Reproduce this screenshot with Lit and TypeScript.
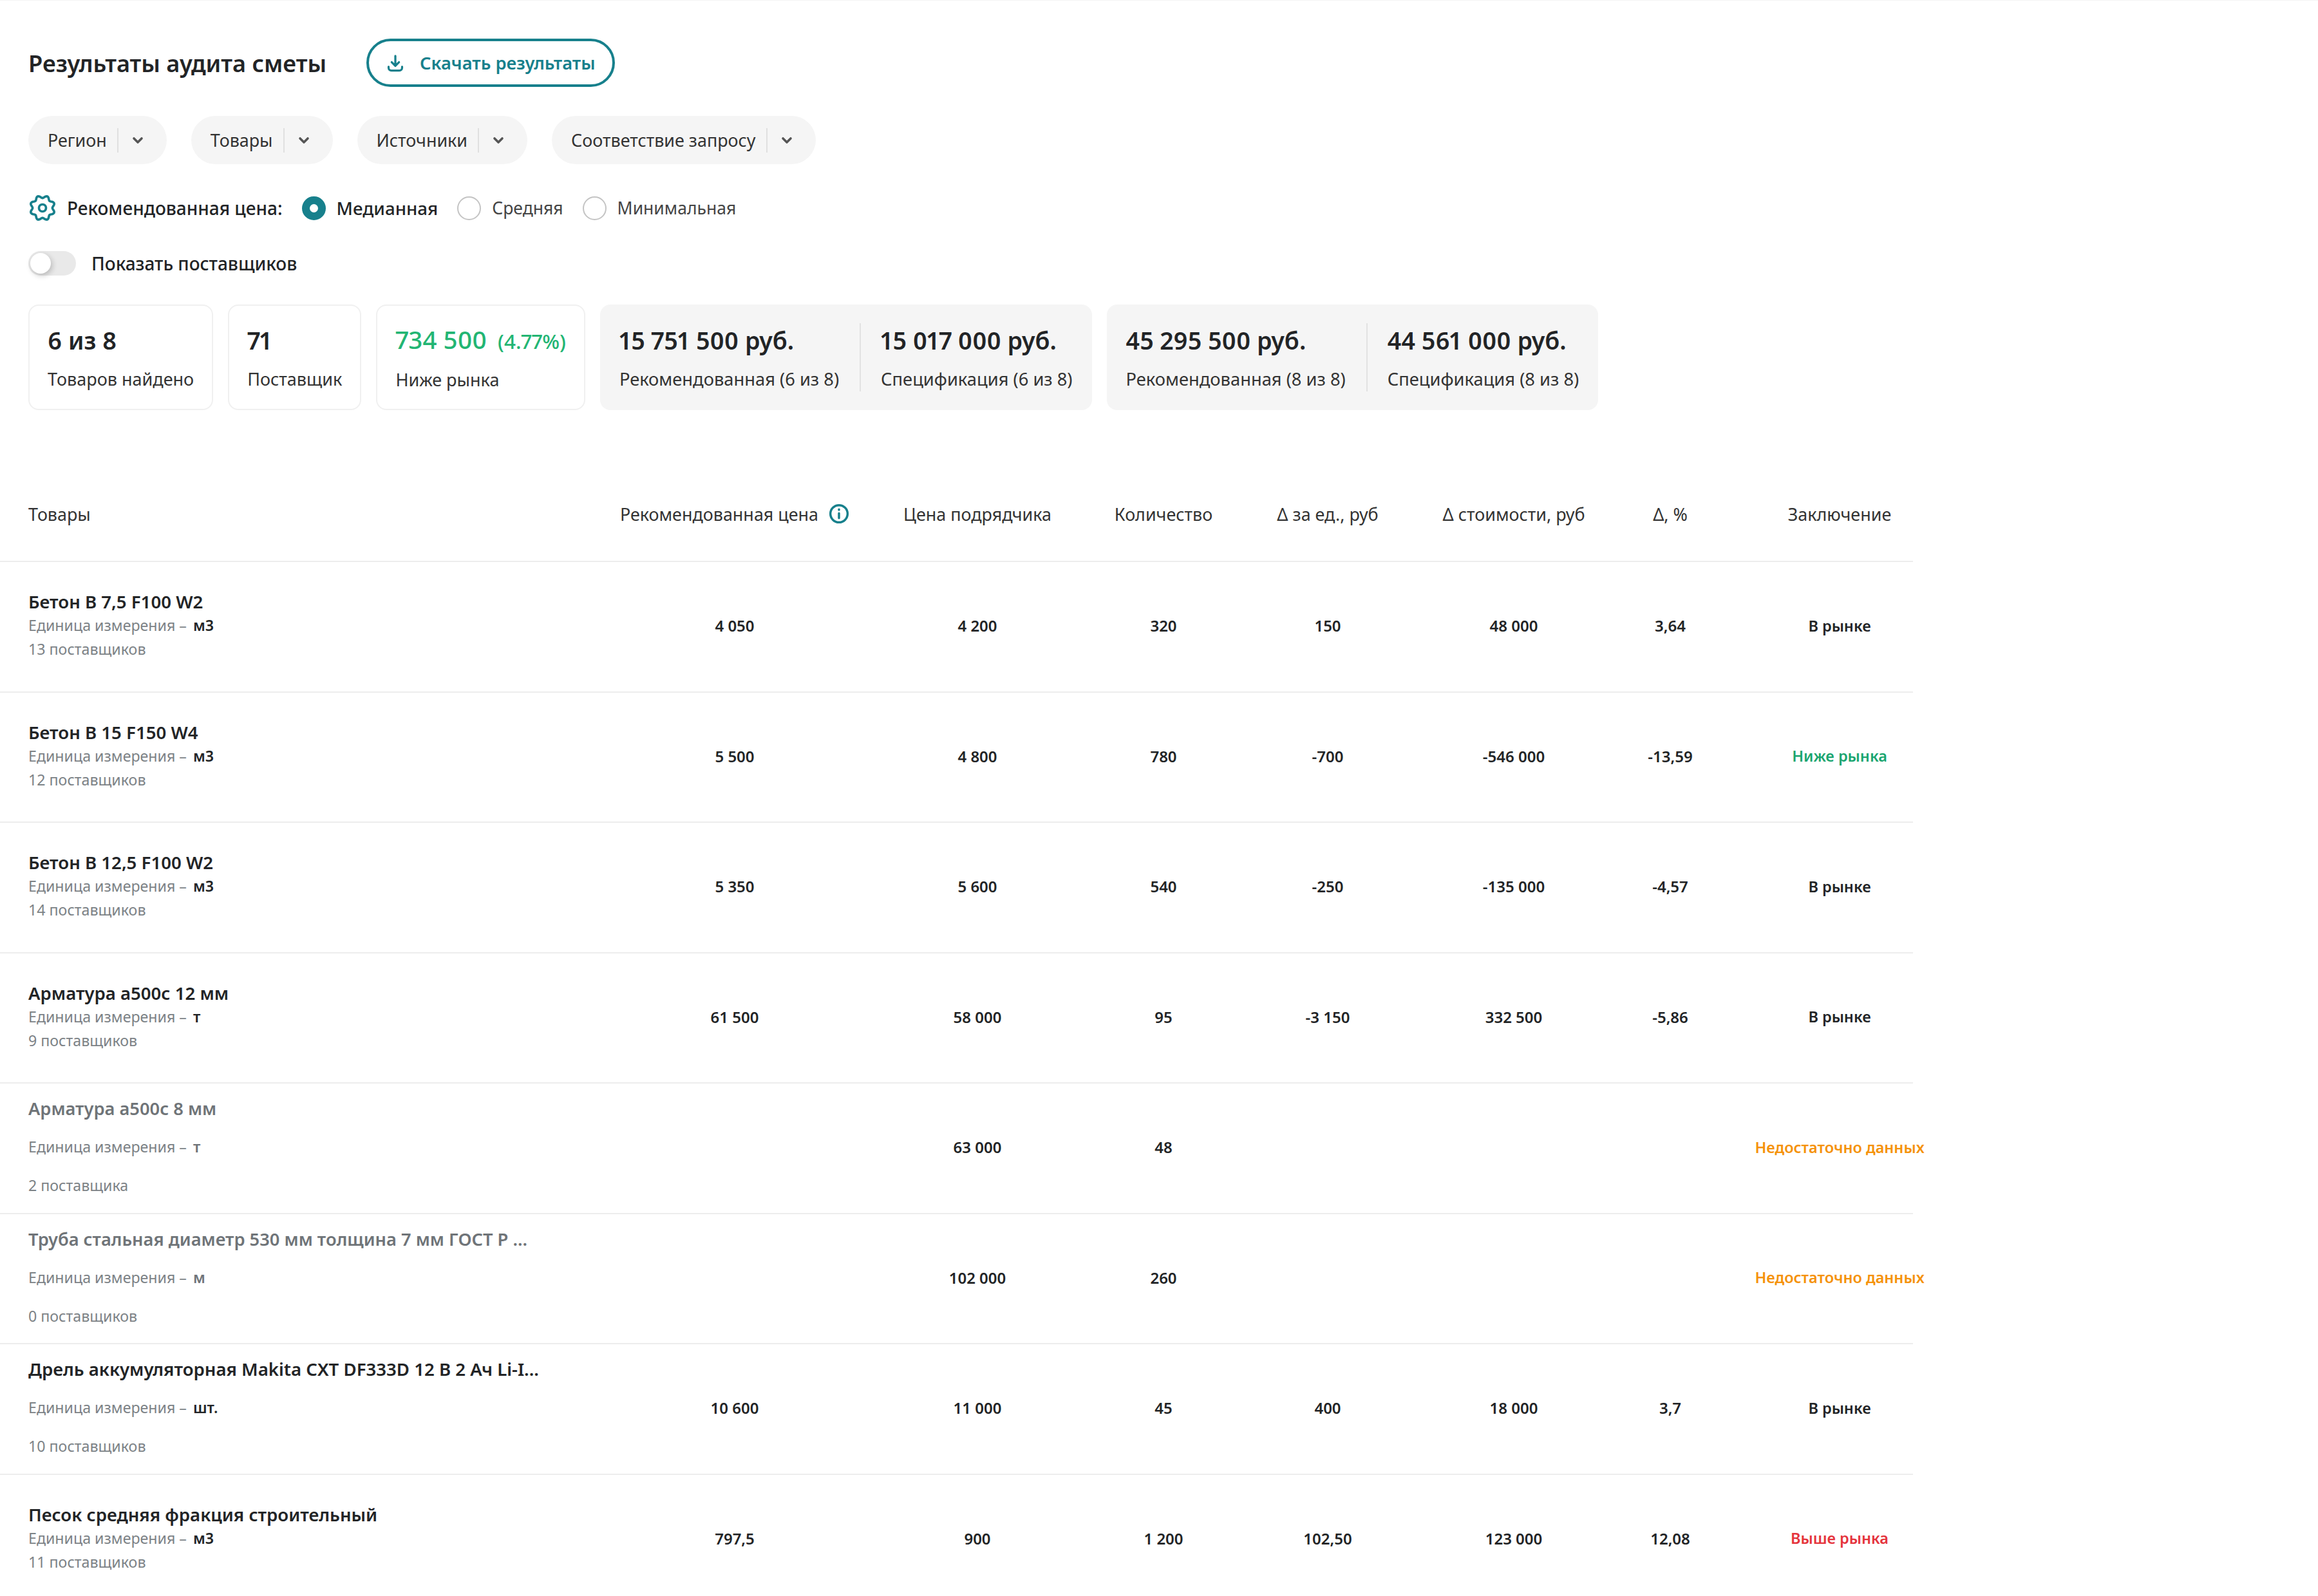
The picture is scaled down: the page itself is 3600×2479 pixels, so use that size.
import { LitElement, css, html, svg } from 'lit';
import { customElement } from 'lit/decorators.js';

type Row = {
  name: string;
  unit: string;
  suppliers: string;
  values: string[];
  verdict: string;
  tone?: string;
  muted?: boolean;
  spread?: boolean;
};

const ROWS: Row[] = [
  { name: 'Бетон В 7,5 F100 W2', unit: 'м3', suppliers: '13 поставщиков', values: ['4 050', '4 200', '320', '150', '48 000', '3,64'], verdict: 'В рынке' },
  { name: 'Бетон В 15 F150 W4', unit: 'м3', suppliers: '12 поставщиков', values: ['5 500', '4 800', '780', '-700', '-546 000', '-13,59'], verdict: 'Ниже рынка', tone: 'low' },
  { name: 'Бетон В 12,5 F100 W2', unit: 'м3', suppliers: '14 поставщиков', values: ['5 350', '5 600', '540', '-250', '-135 000', '-4,57'], verdict: 'В рынке' },
  { name: 'Арматура а500с 12 мм', unit: 'т', suppliers: '9 поставщиков', values: ['61 500', '58 000', '95', '-3 150', '332 500', '-5,86'], verdict: 'В рынке' },
  { name: 'Арматура а500с 8 мм', unit: 'т', suppliers: '2 поставщика', values: ['', '63 000', '48', '', '', ''], verdict: 'Недостаточно данных', tone: 'warn', muted: true, spread: true },
  { name: 'Труба стальная диаметр 530 мм толщина 7 мм ГОСТ Р ...', unit: 'м', suppliers: '0 поставщиков', values: ['', '102 000', '260', '', '', ''], verdict: 'Недостаточно данных', tone: 'warn', muted: true, spread: true },
  { name: 'Дрель аккумуляторная Makita CXT DF333D 12 В 2 Ач Li-I...', unit: 'шт.', suppliers: '10 поставщиков', values: ['10 600', '11 000', '45', '400', '18 000', '3,7'], verdict: 'В рынке', spread: true },
  { name: 'Песок средняя фракция строительный', unit: 'м3', suppliers: '11 поставщиков', values: ['797,5', '900', '1 200', '102,50', '123 000', '12,08'], verdict: 'Выше рынка', tone: 'high' },
];

const HEADERS = ['Цена подрядчика', 'Количество', 'Δ за ед., руб', 'Δ стоимости, руб', 'Δ, %', 'Заключение'];

const chevron = svg`<svg class="chev" viewBox="0 0 16 16" fill="none" stroke="currentColor" stroke-width="2.4" stroke-linecap="round" stroke-linejoin="round"><path d="M4 6l4 4 4-4"/></svg>`;

// wavy outline of the settings gear, a dip at the top and eight lobes
function gearPath(): string {
  const pts: string[] = [];
  for (let i = 0; i < 96; i++) {
    const a = (i / 96) * Math.PI * 2;
    const r = 9.5 - 1.1 * Math.cos(a * 8);
    pts.push(`${(12 + r * Math.sin(a)).toFixed(2)} ${(12 - r * Math.cos(a)).toFixed(2)}`);
  }
  return `M${pts.join('L')}Z`;
}

@customElement('app-root')
export class AppRoot extends LitElement {
  static styles = css`
    :host {
      display: block;
      width: 3600px;
      height: 2479px;
      overflow: hidden;
      background: #fff;
      color: #222426;
      font-family: 'Noto Sans', sans-serif;
      font-size: 28px;
    }
    .top {
      padding: 59px 0 0 44px;
      border-top: 1px solid #f4f4f4;
      display: flex;
      flex-direction: column;
      align-items: flex-start;
    }
    .title-row {
      display: flex;
      align-items: center;
      gap: 62px;
      height: 75px;
    }
    h1 {
      margin: 0;
      font-size: 36.2px;
      font-weight: 600;
    }
    .download {
      display: flex;
      align-items: center;
      gap: 21px;
      box-sizing: border-box;
      height: 75px;
      width: 386px;
      padding-left: 24px;
      border: 4px solid #17808c;
      border-radius: 38px;
      color: #17808c;
      font-weight: 600;
      font-size: 27.3px;
    }
    .download svg { width: 34px; height: 34px; flex: none; }
    .filters {
      display: flex;
      gap: 38px;
      margin-top: 45px;
    }
    .pill {
      display: flex;
      align-items: center;
      height: 75px;
      padding: 0 33px 0 30px;
      border-radius: 38px;
      background: #f5f5f5;
      font-size: 26.9px;
      color: #333;
    }
    .pill .sep {
      width: 2px;
      height: 38px;
      margin: 0 18px 0 16px;
      background: #e0e0e0;
    }
    .chev { width: 24px; height: 24px; color: #555; }
    .price {
      display: flex;
      align-items: center;
      margin-top: 48px;
      height: 40px;
      font-size: 26.5px;
    }
    .gear { width: 44px; height: 44px; flex: none; margin-right: 16px; }
    .price b { font-size: 28px; font-weight: 500; margin-right: 30px; }
    .radio {
      display: flex;
      align-items: center;
      gap: 17px;
      margin-right: 30px;
      color: #444;
    }
    .radio i {
      box-sizing: border-box;
      width: 37px;
      height: 37px;
      border-radius: 50%;
      border: 2px solid #c4c4c4;
    }
    .radio.on { color: #222426; font-size: 27.7px; font-weight: 500; }
    .radio.on i { border: 12px solid #17808c; }
    .toggle-row {
      display: flex;
      align-items: center;
      gap: 24px;
      margin-top: 47px;
      height: 38px;
      font-size: 28px;
      font-weight: 500;
    }
    .toggle {
      position: relative;
      width: 74px;
      height: 38px;
      border-radius: 19px;
      background: #e9e9e9;
    }
    .toggle::after {
      content: '';
      position: absolute;
      left: 3px;
      top: 3px;
      width: 32px;
      height: 32px;
      border-radius: 50%;
      background: #fff;
      box-shadow: 2px 3px 8px rgba(0, 0, 0, 0.22);
    }
    .cards {
      display: flex;
      gap: 23px;
      margin-top: 45px;
    }
    .card {
      box-sizing: border-box;
      height: 164px;
      padding: 0 28px;
      border: 2px solid #f0f0f0;
      border-radius: 16px;
      display: flex;
      flex-direction: column;
      justify-content: center;
      gap: 17px;
    }
    .num {
      font-size: 37.5px;
      font-weight: 600;
      line-height: 50px;
      white-space: nowrap;
      font-variant-numeric: proportional-nums;
    }
    .cap { font-size: 27px; line-height: 36px; color: #333; white-space: nowrap; }
    .num.green { color: #22b573; font-size: 38.5px; font-weight: 500; }
    .green small { font-size: 31.5px; margin-left: 7px; }
    .card.sum {
      flex-direction: row;
      justify-content: flex-start;
      align-items: center;
      gap: 0;
      border: none;
      background: #f5f5f5;
      padding: 0 30px;
    }
    .sum > div { display: flex; flex-direction: column; gap: 17px; }
    .sum .cap { font-size: 27.3px; }
    .sum > div + div {
      margin-left: 32px;
      padding-left: 31px;
      border-left: 2px solid #e2e2e2;
      height: 106px;
      justify-content: center;
    }
    .table { width: 2971px; margin-top: 121px; }
    .row {
      display: grid;
      grid-template-columns: 993px 296px 458px 120px 390px 188px 298px 228px;
      align-items: center;
      box-sizing: border-box;
      height: 202.5px;
      padding-bottom: 3px;
      border-bottom: 2px solid #ededed;
    }
    .row.head { height: 115px; padding-bottom: 33px; color: #333; }
    .cell {
      display: flex;
      justify-content: center;
      align-items: center;
      gap: 16px;
      white-space: nowrap;
      font-size: 24px;
      font-weight: 600;
    }
    .head .cell { font-size: 26.9px; font-weight: 400; }
    .head .cell:first-child { justify-content: flex-start; padding-left: 44px; }
    .info { width: 32px; height: 32px; flex: none; }
    .prod {
      padding-left: 44px;
      display: flex;
      flex-direction: column;
      gap: 0;
      line-height: 37px;
    }
    .prod.spread { gap: 23px; }
    .pname { font-size: 27.6px; font-weight: 600; white-space: nowrap; }
    .sub { font-size: 23.2px; color: #7c8286; }
    .sub b { font-weight: 600; color: #222426; margin-left: 4px; }
    .muted .pname { font-size: 27.3px; color: #6f7478; }
    .muted .sub b { color: #6f7478; }
    .verdict { font-size: 23.5px; }
    .low { color: #1aa56f; }
    .warn { color: #f5920a; }
    .high { color: #e5343c; }
  `;

  renderRow(r: Row) {
    return html`
      <div class="row ${r.muted ? 'muted' : ''}">
        <div class="prod ${r.spread ? 'spread' : ''}">
          <div class="pname">${r.name}</div>
          <div class="sub">Единица измерения – <b>${r.unit}</b></div>
          <div class="sub">${r.suppliers}</div>
        </div>
        ${r.values.map((v) => html`<div class="cell">${v}</div>`)}
        <div class="cell verdict ${r.tone ?? ''}">${r.verdict}</div>
      </div>
    `;
  }

  render() {
    return html`
      <div class="top">
        <div class="title-row">
          <h1>Результаты аудита сметы</h1>
          <div class="download">
            <svg viewBox="0 0 24 24" fill="none" stroke="currentColor" stroke-width="2.3" stroke-linecap="round" stroke-linejoin="round"><path d="M12 4.200V14.500M8 11l4 4 4-4M4.600 16v1.200a3 3 0 0 0 3 3h8.800a3 3 0 0 0 3-3V16"/></svg>
            Скачать результаты
          </div>
        </div>
        <div class="filters">
          ${['Регион', 'Товары', 'Источники', 'Соответствие запросу'].map(
            (f) => html`<div class="pill">${f}<span class="sep"></span>${chevron}</div>`
          )}
        </div>
        <div class="price">
          <svg class="gear" viewBox="0 0 24 24" fill="none" stroke="#17808c" stroke-width="2"><path d=${gearPath()}/><circle cx="12" cy="12" r="3"/></svg>
          <b>Рекомендованная цена:</b>
          <span class="radio on"><i></i>Медианная</span>
          <span class="radio"><i></i>Средняя</span>
          <span class="radio"><i></i>Минимальная</span>
        </div>
        <div class="toggle-row"><span class="toggle"></span>Показать поставщиков</div>
        <div class="cards">
          <div class="card"><div class="num">6 из 8</div><div class="cap">Товаров найдено</div></div>
          <div class="card"><div class="num">71</div><div class="cap">Поставщик</div></div>
          <div class="card"><div class="num green">734 500 <small>(4.77%)</small></div><div class="cap">Ниже рынка</div></div>
          <div class="card sum">
            <div><div class="num">15 751 500 руб.</div><div class="cap">Рекомендованная (6 из 8)</div></div>
            <div><div class="num">15 017 000 руб.</div><div class="cap">Спецификация (6 из 8)</div></div>
          </div>
          <div class="card sum">
            <div><div class="num">45 295 500 руб.</div><div class="cap">Рекомендованная (8 из 8)</div></div>
            <div><div class="num">44 561 000 руб.</div><div class="cap">Спецификация (8 из 8)</div></div>
          </div>
        </div>
      </div>
      <div class="table">
        <div class="row head">
          <div class="cell">Товары</div>
          <div class="cell">Рекомендованная цена
            <svg class="info" viewBox="0 0 24 24" fill="none" stroke="#17808c" stroke-width="2.600"><circle cx="12" cy="12" r="10"/><path d="M12 11.500v5.500M12 7v.5" stroke-linecap="round"/></svg>
          </div>
          ${HEADERS.map((h) => html`<div class="cell">${h}</div>`)}
        </div>
        ${ROWS.map((r) => this.renderRow(r))}
      </div>
    `;
  }
}
